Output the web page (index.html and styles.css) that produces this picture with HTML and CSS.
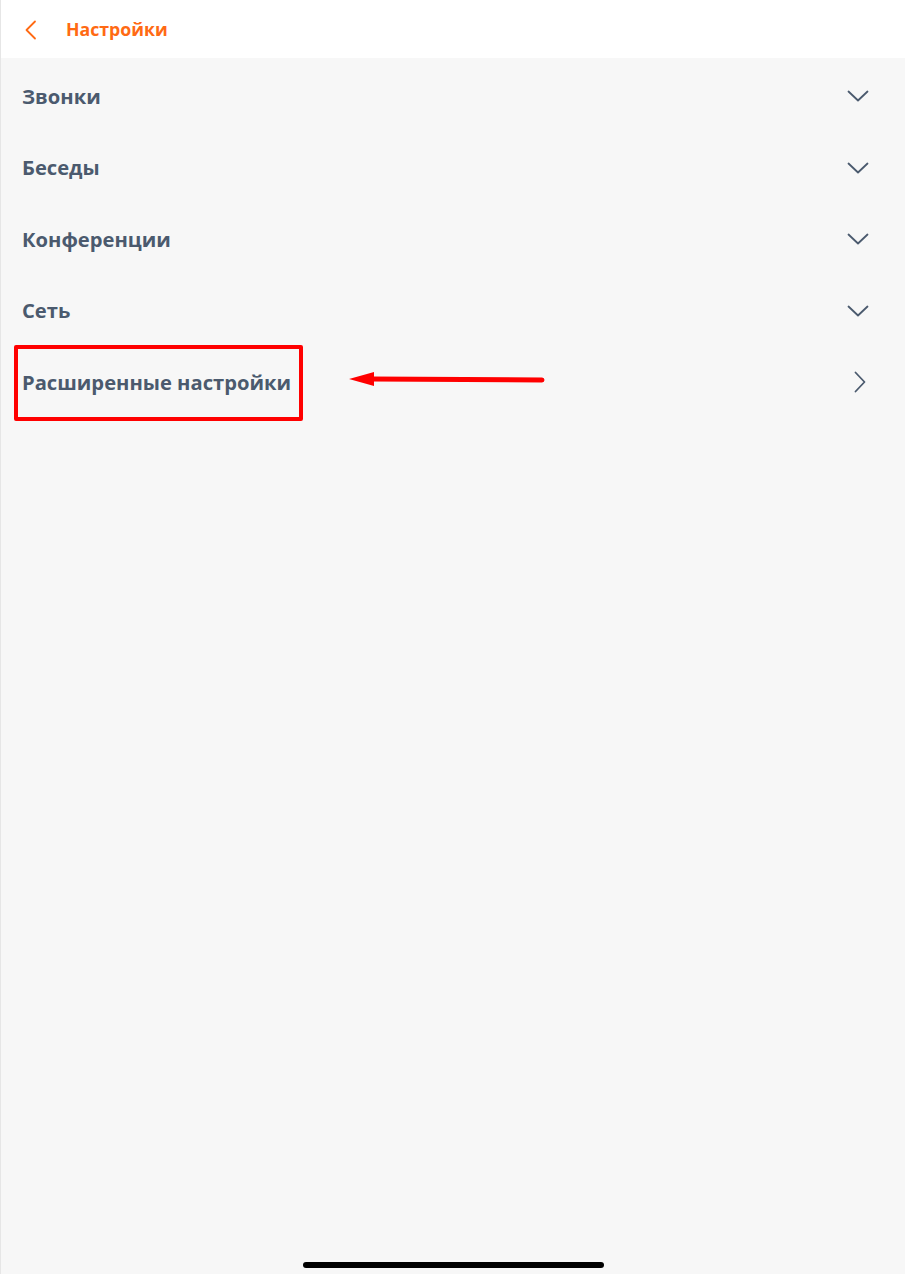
FILE: index.html
```html
<!DOCTYPE html>
<html lang="ru">
<head>
  <meta charset="UTF-8">
  <meta name="viewport" content="width=device-width, initial-scale=1.0">
  <title>Настройки</title>
  <link rel="stylesheet" href="styles.css">
</head>
<body>
  <div class="screen">
    <header class="top-bar">
      <svg class="back" width="14" height="20" viewBox="0 0 14 20">
        <path d="M11 1.5 L2.5 10 L11 18.5" fill="none" stroke="#ff6a13" stroke-width="1.8" stroke-linecap="round" stroke-linejoin="round"/>
      </svg>
      <h1 class="title">Настройки</h1>
    </header>

    <ul class="settings">
      <li class="row">
        <span>Звонки</span>
        <svg class="chev" width="22" height="12" viewBox="0 0 22 12"><path d="M1.5 1.5 L11 10.5 L20.5 1.5" /></svg>
      </li>
      <li class="row">
        <span>Беседы</span>
        <svg class="chev" width="22" height="12" viewBox="0 0 22 12"><path d="M1.5 1.5 L11 10.5 L20.5 1.5" /></svg>
      </li>
      <li class="row">
        <span>Конференции</span>
        <svg class="chev" width="22" height="12" viewBox="0 0 22 12"><path d="M1.5 1.5 L11 10.5 L20.5 1.5" /></svg>
      </li>
      <li class="row">
        <span>Сеть</span>
        <svg class="chev" width="22" height="12" viewBox="0 0 22 12"><path d="M1.5 1.5 L11 10.5 L20.5 1.5" /></svg>
      </li>
      <li class="row advanced">
        <span>Расширенные настройки</span>
        <svg class="chev right" width="12" height="22" viewBox="0 0 12 22"><path d="M1.5 1.5 L10.5 11 L1.5 20.5" /></svg>

        <!-- annotation -->
        <div class="highlight"></div>
        <svg class="pointer" width="200" height="20" viewBox="0 0 200 20">
          <line x1="194" y1="10" x2="24" y2="9" stroke="#ff0000" stroke-width="5" stroke-linecap="round"/>
          <polygon points="1,9 26,2 26,16" fill="#ff0000"/>
        </svg>
      </li>
    </ul>

    <div class="home-bar"></div>
  </div>
</body>
</html>
```

FILE: styles.css
```css
body {
  margin: 0;
  font-family: 'Open Sans', 'Noto Sans', sans-serif;
  background-color: #f7f7f7;
}

.screen {
  position: relative;
  width: 905px;
  height: 1274px;
  box-sizing: border-box;
  border-left: 1px solid #e6e6e6;
  display: flex;
  flex-direction: column;
}

.top-bar {
  height: 58px;
  background-color: #fff;
  display: flex;
  align-items: center;
  padding-left: 23px;
}

.back {
  margin-top: 1px;
}

.title {
  margin: 0 0 0 28px;
  font-size: 17.7px;
  font-weight: 700;
  color: #ff6a13;
}

.settings {
  list-style: none;
  margin: 0;
  padding: 2px 0 0;
}

.row {
  position: relative;
  height: 71.5px;
  display: flex;
  align-items: center;
  justify-content: space-between;
  padding: 0 36px 0 21px;
  font-size: 20.2px;
  font-weight: 700;
  color: #4b5a6e;
}

.chev {
  margin-top: 1px;
}

.chev path {
  fill: none;
  stroke: #4b5a6e;
  stroke-width: 1.8;
  stroke-linecap: round;
  stroke-linejoin: round;
}

.chev.right {
  margin-right: 3px;
}

.highlight {
  position: absolute;
  left: 13px;
  top: -1px;
  width: 281px;
  height: 68px;
  border: 4px solid #ff0000;
  border-radius: 2px;
}

.pointer {
  position: absolute;
  left: 347px;
  top: 24px;
}

.home-bar {
  position: absolute;
  left: 302px;
  bottom: 6px;
  width: 301px;
  height: 6px;
  border-radius: 3px;
  background-color: #000;
}
```
